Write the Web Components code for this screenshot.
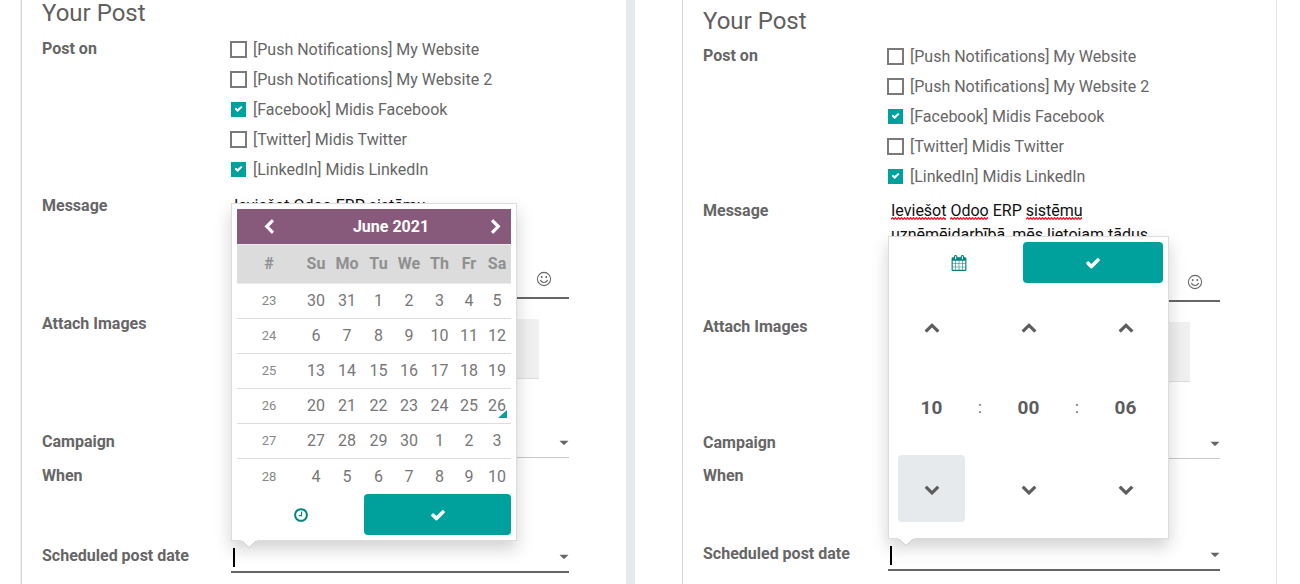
<!DOCTYPE html>
<html lang="en">
<head>
<meta charset="utf-8">
<title>Your Post</title>
<style>
  body { margin: 0; background: #fff; font-family: Roboto, "Liberation Sans", sans-serif; font-size: 16px; color: #666; }
  main { display: grid; grid-template-columns: 21px minmax(0, 605fr) 9px 47px minmax(0, 595fr) 23px; min-height: 100vh; }
  .first { grid-column: 2; border-left: 1px solid #d4d4d4; box-shadow: -1px 0 #eee; --end: 57px; }
  .divider { grid-column: 3; background: #e6eaed; }
  .second { grid-column: 5; border-left: 1px solid #d5d8da; border-right: 1px solid #e6e8ea;
    --top: 8px; --heading-gap: 7px; --label-width: 185px; --channels: 158px; --message: 103px; --attach: 116px; --campaign: 33px; --when: 78px; }
</style>
</head>
<body>
<main>
  <post-form class="first"><date-picker slot="picker"></date-picker></post-form>
  <div class="divider"></div>
  <post-form class="second" spelling><time-picker slot="picker"></time-picker></post-form>
</main>

<script>
const ICONS = {
  check: 'M1671 566q0 40-28 68l-724 724-136 136q-28 28-68 28t-68-28l-136-136-362-362q-28-28-28-68t28-68l136-136q28-28 68-28t68 28l294 295 656-657q28-28 68-28t68 28l136 136q28 28 28 68z',
  left: 'M1427 301l-531 531 531 531q19 19 19 45t-19 45l-166 166q-19 19-45 19t-45-19l-742-742q-19-19-19-45t19-45l742-742q19-19 45-19t45 19l166 166q19 19 19 45t-19 45z',
  right: 'M1363 877l-742 742q-19 19-45 19t-45-19l-166-166q-19-19-19-45t19-45l531-531-531-531q-19-19-19-45t19-45l166-166q19-19 45-19t45 19l742 742q19 19 19 45t-19 45z',
  up: 'M1683 1331l-166 165q-19 19-45 19t-45-19l-531-531-531 531q-19 19-45 19t-45-19l-166-165q-19-19-19-45.5t19-45.5l742-741q19-19 45-19t45 19l742 741q19 19 19 45.5t-19 45.5z',
  down: 'M1683 808l-742 741q-19 19-45 19t-45-19l-742-741q-19-19-19-45.5t19-45.5l166-165q19-19 45-19t45 19l531 531 531-531q19-19 45-19t45 19l166 165q19 19 19 45.5t-19 45.5z',
  caret: 'M220 560h1352l-560 560q-116 90-232 0z',
  clock: 'M1024 544v448q0 14-9 23t-23 9h-320q-14 0-23-9t-9-23v-64q0-14 9-23t23-9h224v-352q0-14 9-23t23-9h64q14 0 23 9t9 23zm416 352q0-148-73-273t-198-198-273-73-273 73-198 198-73 273 73 273 198 198 273 73 273-73 198-198 73-273zm224 0q0 209-103 385.5t-279.5 279.5-385.5 103-385.5-103-279.5-279.5-103-385.5 103-385.5 279.5-279.5 385.5-103 385.5 103 279.5 279.5 103 385.5z',
  calendar: 'M192 1664h288v-288h-288v288zm352 0h320v-288h-320v288zm-352-352h288v-320h-288v320zm352 0h320v-320h-320v320zm-352-384h288v-288h-288v288zm736 736h320v-288h-320v288zm-384-736h320v-288h-320v288zm768 736h288v-288h-288v288zm-384-352h320v-320h-320v320zm-352-864v-288q0-13-9.5-22.5t-22.5-9.5h-64q-13 0-22.5 9.5t-9.5 22.5v288q0 13 9.5 22.5t22.5 9.5h64q13 0 22.5-9.5t9.5-22.5zm736 864h288v-320h-288v320zm-384-384h320v-288h-320v288zm384 0h288v-288h-288v288zm32-480v-288q0-13-9.5-22.5t-22.5-9.5h-64q-13 0-22.5 9.5t-9.5 22.5v288q0 13 9.5 22.5t22.5 9.5h64q13 0 22.5-9.5t9.5-22.5zm384-64v1280q0 52-38 90t-90 38h-1408q-52 0-90-38t-38-90v-1280q0-52 38-90t90-38h128v-96q0-66 47-113t113-47h64q66 0 113 47t47 113v96h384v-96q0-66 47-113t113-47h64q66 0 113 47t47 113v96h128q52 0 90 38t38 90z',
  smile: 'M896 96a800 800 0 1 0 0 1600a800 800 0 1 0 0-1600zm0 120a680 680 0 1 1 0 1360a680 680 0 1 1 0-1360zM640 560a105 125 0 1 0 0 250a105 125 0 1 0 0-250zm512 0a105 125 0 1 0 0 250a105 125 0 1 0 0-250zM430 1020q120 330 466 330t466-330l-110-30q-100 240-356 240t-356-240z'
};

class PostIcon extends HTMLElement {
  connectedCallback() {
    this.attachShadow({ mode: 'open' }).innerHTML = `
      <style>:host { display: inline-block; width: 16px; height: 16px; } svg { display: block; width: 100%; height: 100%; fill: currentColor; }</style>
      <svg viewBox="0 0 1792 1792" aria-hidden="true"><path d="${ICONS[this.getAttribute('name')]}"/></svg>`;
  }
}

/* A tick box with its caption. */
class CheckItem extends HTMLElement {
  connectedCallback() {
    this.attachShadow({ mode: 'open' }).innerHTML = `
      <style>
        :host { display: block; }
        label { display: flex; align-items: center; gap: 6px; height: 30px; margin-left: -1px; white-space: nowrap; }
        input { appearance: none; box-sizing: border-box; flex: none; width: 17px; height: 17px; margin: 0; border: 2px solid #7a7a7a; background: #fff; }
        input:checked { border: 1px solid transparent; background: #00a09d padding-box; display: grid; place-items: center; }
        input:checked::before { content: ""; width: 8px; height: 6px; background: #fff;
          clip-path: polygon(0 50%, 18% 28%, 38% 52%, 82% 0, 100% 20%, 40% 100%); }
      </style>
      <label><input type="checkbox" ${this.hasAttribute('checked') ? 'checked' : ''}><span><slot></slot></span></label>`;
  }
}

/* One line of the form: a caption column and a field column. */
class FormRow extends HTMLElement {
  connectedCallback() {
    this.attachShadow({ mode: 'open' }).innerHTML = `
      <style>
        :host { display: grid; grid-template-columns: var(--label-width, 189px) minmax(0, 1fr); align-items: start; }
        .label { line-height: var(--label-line, 24px); font-weight: 700; }
        .field { position: relative; }
      </style>
      <div class="label"><slot name="label"></slot></div><div class="field"><slot></slot></div>`;
  }
}

/* Floating card above a field, with a small pointer at its lower left. */
class PickerPopover extends HTMLElement {
  connectedCallback() {
    this.attachShadow({ mode: 'open' }).innerHTML = `
      <style>
        :host { display: block; position: absolute; left: 0; bottom: calc(100% + 3px); box-sizing: border-box; padding: 5px;
          border: 1px solid #dcdcdc; background: #fff; box-shadow: 0 8px 16px rgba(0,0,0,.18); z-index: 2; }
        .pointer { position: absolute; left: 9px; top: 100%; width: 16px; height: 8px; }
        svg { display: block; }
      </style>
      <slot></slot>
      <div class="pointer"><svg width="16" height="8" viewBox="0 0 16 8"><path d="M0 0L8 7.5L16 0" fill="#fff" stroke="#ccc"/><path d="M0 0H16" stroke="#fff" stroke-width="2"/></svg></div>`;
  }
}

const BUTTONS = `
  button { font: inherit; color: inherit; border: 0; padding: 0; margin: 0; background: none; display: grid; place-items: center; }
  .bar { display: flex; height: 41px; color: #00857f; }
  .bar button { flex: 1; }
  .bar .primary { flex: none; background: #00a09d; color: #fff; border-radius: 4px; }`;

class DatePicker extends HTMLElement {
  connectedCallback() {
    const first = [30, 31, 1, 2, 3, 4, 5];
    const rows = [];
    for (let w = 0; w < 6; w++) {
      const days = first.map((d, i) => {
        const n = w * 7 + i - 1;
        const day = w === 0 ? d : (n > 30 ? n - 30 : n);
        return `<td${n === 26 ? ' class="today"' : ''}>${day}</td>`;
      });
      rows.push(`<tr><td class="week">${23 + w}</td>${days.join('')}</tr>`);
    }
    this.attachShadow({ mode: 'open' }).innerHTML = `
      <style>
        :host { display: block; }
        ${BUTTONS}
        .title { display: grid; grid-template-columns: 64px 1fr 30px; align-items: center; height: 35px; background: #875a7b; color: #fff; font-weight: 700; text-align: center; }
        .title button { height: 35px; }
        table { width: 274px; table-layout: fixed; border-collapse: separate; border-spacing: 0; text-align: center; color: #777; }
        th, td { padding: 0; box-sizing: border-box; line-height: 24px; }
        th { height: 40px; background: #dcdcdc; color: #909090; font-weight: 700; border-top: 1px solid #e9e9ee; border-bottom: 1px solid #ececec; }
        td { height: 35px; border-bottom: 1px solid #dedede; }
        tr:last-child td { border-bottom: 0; }
        .week { font-size: 13px; color: #888; }
        .today { position: relative; }
        .today::after { content: ""; position: absolute; right: 4px; bottom: 5px; width: 9px; height: 8px; background: #00a09d; clip-path: polygon(100% 0, 100% 100%, 0 100%); }
        .primary { width: 147px; }
      </style>
      <picker-popover>
        <div class="title"><button type="button" aria-label="Previous month"><post-icon name="left"></post-icon></button><span>June 2021</span><button type="button" aria-label="Next month"><post-icon name="right"></post-icon></button></div>
        <table>
          <colgroup>${[64, 30, 32, 31, 30, 31, 28, 28].map(w => `<col style="width:${w}px">`).join('')}</colgroup>
          <thead><tr>${['#', 'Su', 'Mo', 'Tu', 'We', 'Th', 'Fr', 'Sa'].map(d => `<th scope="col">${d}</th>`).join('')}</tr></thead>
          <tbody>${rows.join('')}</tbody>
        </table>
        <div class="bar"><button type="button" aria-label="Select time"><post-icon name="clock"></post-icon></button><button type="button" class="primary" aria-label="Apply"><post-icon name="check"></post-icon></button></div>
      </picker-popover>`;
  }
}

class TimePicker extends HTMLElement {
  connectedCallback() {
    const step = (dir, unit, on) => `<button type="button" class="${on ? 'active' : ''}" aria-label="${unit} ${dir}"><post-icon name="${dir}"></post-icon></button>`;
    const units = ['Hour', 'Minute', 'Second'];
    this.attachShadow({ mode: 'open' }).innerHTML = `
      <style>
        :host { display: block; }
        ${BUTTONS}
        .primary { width: 140px; }
        .time { display: grid; grid-template: repeat(3, 81px) / 67px 30px 67px 30px 67px; place-items: center; padding: 3px 4px 4px; color: #5d5d5d; }
        .time button { width: 67px; height: 67px; border-radius: 4px; }
        .time .value { font-size: 19px; font-weight: 700; }
        .time .active { background: #e6eaed; }
      </style>
      <picker-popover>
        <div class="bar"><button type="button" aria-label="Select date"><post-icon name="calendar"></post-icon></button><button type="button" class="primary" aria-label="Apply"><post-icon name="check"></post-icon></button></div>
        <div class="time">
          ${units.map(u => step('up', u)).join('<span></span>')}
          <button type="button" class="value">10</button><span>:</span><button type="button" class="value">00</button><span>:</span><button type="button" class="value">06</button>
          ${units.map((u, i) => step('down', u, i === 0)).join('<span></span>')}
        </div>
      </picker-popover>`;
  }
}

class PostForm extends HTMLElement {
  connectedCallback() {
    const wave = (x, w) => `<svg style="left:${x}px" width="${w}" height="3"><use href="#wave"/></svg>`;
    const zigzag = 'M0 2.3' + 'l1.5-1.6 1.5 1.6'.repeat(20);
    this.attachShadow({ mode: 'open' }).innerHTML = `
      <style>
        :host { display: block; box-sizing: border-box; padding: var(--top, 0px) var(--end, 56px) 0 20px; min-width: 0; }
        h2 { margin: 0 0 var(--heading-gap, 8px); font-size: 24px; line-height: 26px; font-weight: 400; color: #5f5f5f; }
        input, textarea, select { display: block; box-sizing: border-box; width: 100%; margin: 0; border: 0; border-radius: 0; background: transparent; font: inherit; color: #111; outline: 0; appearance: none; }
        textarea { padding: 0 60px 0 3px; line-height: 24px; height: var(--message, 105px); border-bottom: 2px solid #666; resize: none; overflow: hidden; }
        select { height: 28px; border-bottom: 1px solid #c8c8c8; }
        input { height: 29px; border-bottom: 2px solid #666; }
        .channels { --label-line: 30px; height: var(--channels, 160px); }
        .message { margin-bottom: 13px; }
        .attach { height: var(--attach, 118px); }
        .campaign { height: var(--campaign, 34px); }
        .when { height: var(--when, 80px); }
        .drop { display: block; width: calc(100% - 30px); height: 60px; margin-top: 7px; padding: 0; border: 0; border-bottom: 1px solid #ddd; background: #f0f0f0; }
        .emoji { position: absolute; right: 17px; bottom: 12px; width: 16px; height: 16px; padding: 0; border: 0; background: none; color: #666; }
        .emoji post-icon { display: block; }
        .caret { position: absolute; right: -1px; top: 5px; width: 12px; height: 16px; pointer-events: none; }
        .cursor { position: absolute; left: 2px; top: 4px; width: 2px; height: 19px; background: #000; }
        .spelling svg { position: absolute; top: 18px; }
      </style>
      <h2>Your Post</h2>
      <form-row class="channels"><span slot="label">Post on</span>
        <check-item>[Push Notifications] My Website</check-item>
        <check-item>[Push Notifications] My Website 2</check-item>
        <check-item checked>[Facebook] Midis Facebook</check-item>
        <check-item>[Twitter] Midis Twitter</check-item>
        <check-item checked>[LinkedIn] Midis LinkedIn</check-item>
      </form-row>
      <form-row class="message"><label slot="label" for="message">Message</label>
        <textarea id="message" spellcheck="false">Ieviešot Odoo ERP sistēmu
uznēmējdarbībā, mēs lietojam tādus</textarea>
        ${this.hasAttribute('spelling') ? `<div class="spelling"><svg width="0" height="0"><defs><path id="wave" d="${zigzag}" fill="none" stroke="#e8202c" stroke-width="1.3"/></defs></svg>${wave(3, 55)}${wave(62, 38)}${wave(138, 56)}</div>` : ''}
        <button type="button" class="emoji" aria-label="Insert emoji"><post-icon name="smile"></post-icon></button>
      </form-row>
      <form-row class="attach"><label slot="label" for="attach">Attach Images</label><button type="button" id="attach" class="drop"></button></form-row>
      <form-row class="campaign"><label slot="label" for="campaign">Campaign</label><select id="campaign"></select><post-icon class="caret" name="caret"></post-icon></form-row>
      <form-row class="when"><span slot="label">When</span></form-row>
      <form-row class="schedule"><label slot="label" for="date">Scheduled post date</label>
        <input id="date" type="text"><span class="cursor"></span><post-icon class="caret" name="caret"></post-icon>
        <slot name="picker"></slot>
      </form-row>`;
  }
}

customElements.define('post-icon', PostIcon);
customElements.define('check-item', CheckItem);
customElements.define('form-row', FormRow);
customElements.define('picker-popover', PickerPopover);
customElements.define('date-picker', DatePicker);
customElements.define('time-picker', TimePicker);
customElements.define('post-form', PostForm);
</script>
</body>
</html>
